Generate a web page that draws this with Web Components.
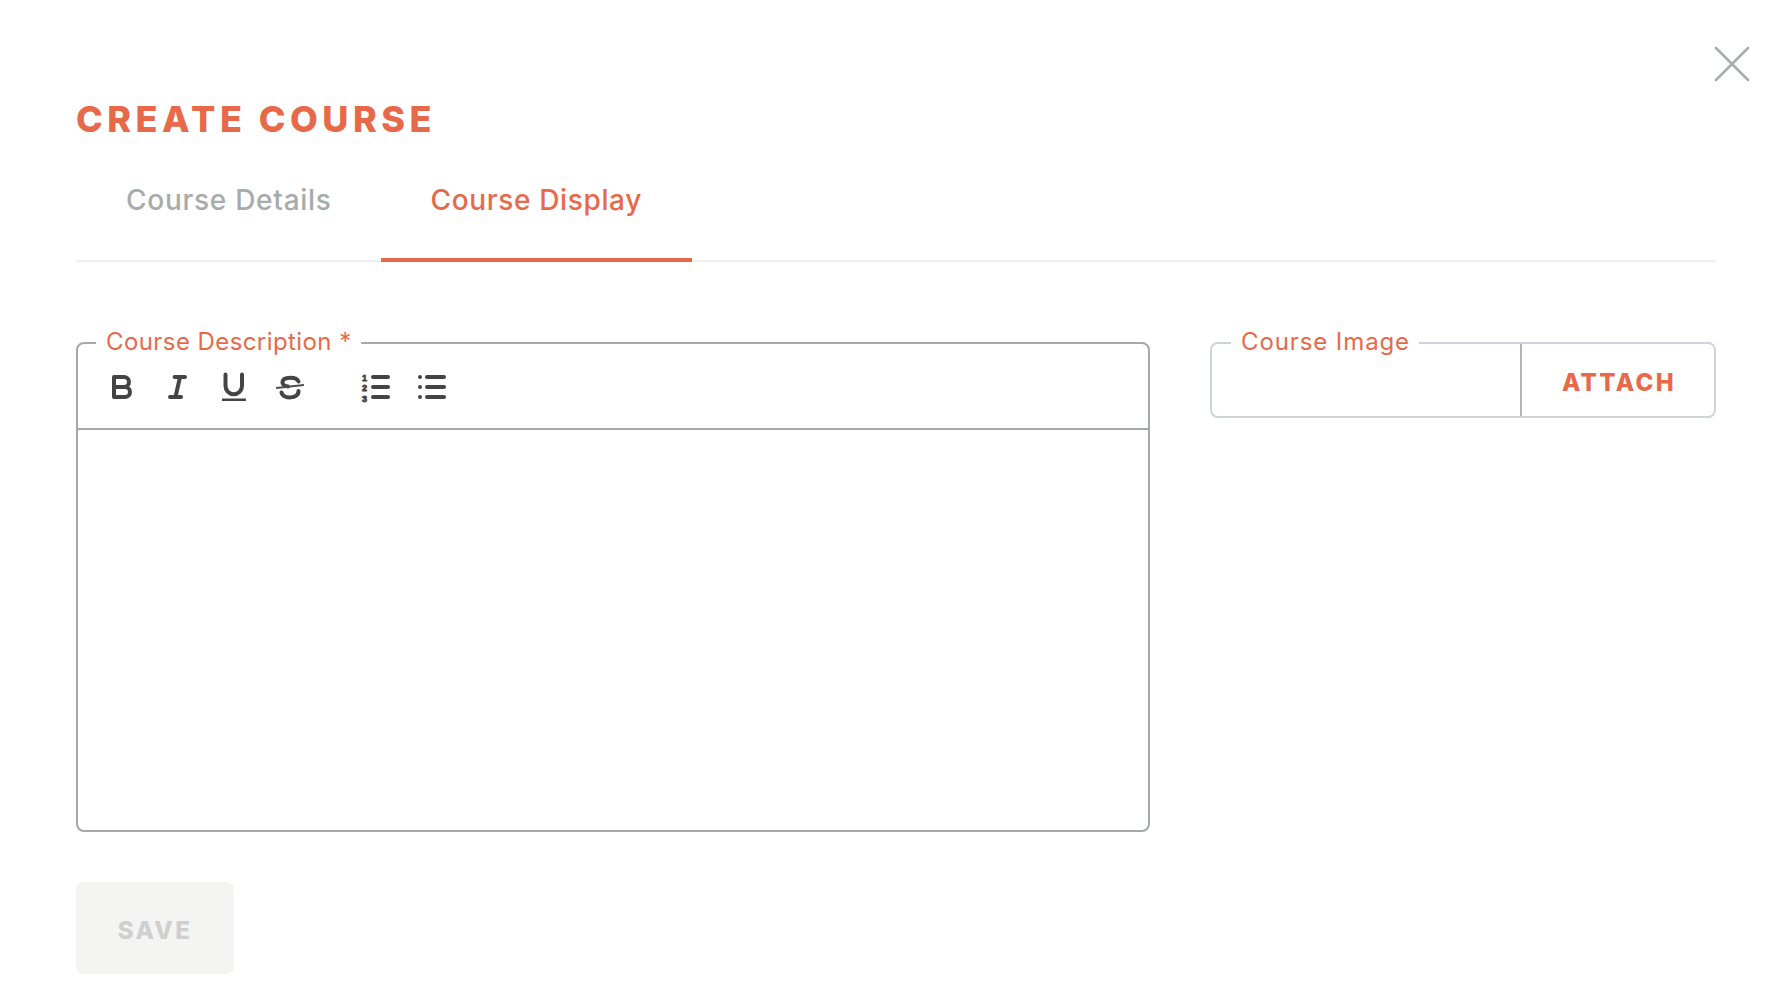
<!DOCTYPE html>
<html lang="en"><head><meta charset="utf-8"><title>Create Course</title>
<style>
html,body{margin:0;background:#fff}
body{font-family:Inter,"Liberation Sans",sans-serif;--accent:#e8694a;width:1792px;height:992px;overflow:hidden}
</style></head><body>
<course-modal>
  <course-tabs slot="tabs"></course-tabs>
  <field-box slot="main" label="Course Description *" tone="#a5aaa8" radius="8" lx="20" ls=".42"><rich-editor></rich-editor></field-box>
  <field-box slot="side" label="Course Image" tone="#cfd3da" radius="8" lx="21" ls=".9"><attach-input></attach-input></field-box>
  <save-button slot="save">SAVE</save-button>
</course-modal>
<script>
function def(name, css, html, extra){
  const tpl=document.createElement('template');
  tpl.innerHTML='<style>'+css+'</style>'+html;
  customElements.define(name,class extends HTMLElement{
    constructor(){super();this.attachShadow({mode:'open'}).appendChild(tpl.content.cloneNode(true));}
    connectedCallback(){extra&&extra(this);}
  });
}
def('course-modal',`
 :host{display:block;position:relative;box-sizing:border-box;width:1792px;height:992px;padding:97px 76px 0}
 h1{margin:0;font-size:36px;line-height:44px;font-weight:800;letter-spacing:4.5px;color:var(--accent)}
 .close{position:absolute;left:1714px;top:46px;width:36px;height:36px;display:block;background:none;border:0;padding:0}
 .tabs{display:block;margin-top:20px}
 .row{display:grid;grid-template-columns:1074px 506px;column-gap:60px;align-items:start;margin-top:80px}
 .save{display:block;margin-top:50px}
`,`
 <button class="close" aria-label="Close"><svg width="36" height="36" viewBox="0 0 36 36" fill="none" stroke="#a9aeab" stroke-width="2.6" stroke-linecap="round"><path d="M2 2 34 34M34 2 2 34"/></svg></button>
 <h1>CREATE COURSE</h1>
 <div class="tabs"><slot name="tabs"></slot></div>
 <div class="row"><div><slot name="main"></slot></div><div><slot name="side"></slot></div></div>
 <div class="save"><slot name="save"></slot></div>
`);
def('course-tabs',`
 :host{display:flex;border-bottom:2px solid #efefef;height:99px;box-sizing:content-box}
 .tab{box-sizing:border-box;height:101px;padding:0 49px 0 50px;line-height:78px;font-size:28px;letter-spacing:.72px;color:#a7acaa;white-space:nowrap;font-weight:500}
 .tab.on{color:var(--accent);border-bottom:4px solid var(--accent);letter-spacing:.64px;padding:0 50px}
`,`<div class="tab">Course Details</div><div class="tab on">Course Display</div>`);
def('field-box',`
 :host{display:block;position:relative}
 .box{border:2px solid var(--tone);border-radius:var(--rad);overflow:hidden}
 .label{position:absolute;left:var(--lx);top:-16px;padding:0 9px 0 10px;background:#fff;font-size:24px;line-height:32px;color:var(--accent);white-space:nowrap;letter-spacing:var(--ls)}
`,`<div class="box"><slot></slot></div><div class="label"></div>`,el=>{
  el.shadowRoot.querySelector('.label').textContent=el.getAttribute('label');
  el.style.setProperty('--tone',el.getAttribute('tone'));
  el.style.setProperty('--rad',el.getAttribute('radius')+'px');
  el.style.setProperty('--lx',el.getAttribute('lx')+'px');
  el.style.setProperty('--ls',el.getAttribute('ls')+'px');
});
def('rich-editor',`
 :host{display:block}
 .bar{display:flex;align-items:center;gap:24px;height:86px;padding:2px 0 0 28px;box-sizing:border-box;border-bottom:2px solid #a5aaa8}
 .bar svg{display:block;width:32px;height:32px;fill:none;stroke:#444;stroke-linecap:round;stroke-linejoin:round;overflow:visible}
 .sep{width:5px}
 .area{height:400px}
`,`<div class="bar">
 <svg viewBox="0 0 32 32" stroke-width="4"><path d="M8 6H18A5 5 0 0 1 18 16H8ZM8 16H19A5 5 0 0 1 19 26H8Z"/></svg>
 <svg viewBox="0 0 32 32" stroke-width="4"><path d="M12.600 6H23M8 26H19M18 6 13.500 26"/></svg>
 <svg viewBox="0 0 32 32" stroke-width="4"><path d="M7.500 3.500V15A8.250 8.250 0 0 0 24 15V3.500"/><path d="M4 28.700H28" stroke-linecap="butt" stroke-width="2.600"/></svg>
 <svg viewBox="0 0 32 32" stroke-width="4"><path d="M24.500 10.500C23 5.500 9 5 8.500 11C8.200 14 11 15 14 15.500M24.500 20C25 28 9 28.500 7.500 21.500"/><path d="M2 17 30 14" stroke-width="2" stroke="#4d4d4d" stroke-linecap="butt"/></svg>
 <div class="sep"></div>
 <svg viewBox="0 0 32 32" stroke-width="4"><path d="M14 6H29M14 16H29M14 26H29"/><g fill="#444" stroke="#444" stroke-width=".8" font-family="Liberation Sans,sans-serif" font-size="9" font-weight="700"><text x="3" y="9.500">1</text><text x="3" y="20">2</text><text x="3" y="30.500">3</text></g></svg>
 <svg viewBox="0 0 32 32" stroke-width="4"><path d="M12 6H29M12 16H29M12 26H29"/><g fill="#444" stroke="none"><circle cx="5" cy="6" r="2"/><circle cx="5" cy="16" r="2"/><circle cx="5" cy="26" r="2"/></g></svg>
</div><div class="area"></div>`);
def('attach-input',`
 :host{display:grid;grid-template-columns:1fr 194px;height:72px}
 .btn{border-left:2px solid #b2b5b7;display:flex;align-items:center;justify-content:center;font-size:24px;font-weight:800;letter-spacing:2.4px;color:var(--accent);padding:4px 0 0 2px;box-sizing:border-box}
`,`<div></div><div class="btn">ATTACH</div>`);
def('save-button',`
 :host{display:flex;align-items:center;justify-content:center;box-sizing:border-box;width:158px;height:92px;background:#f4f4f3;border-radius:8px;font-size:24px;font-weight:800;letter-spacing:2.4px;color:#cfcfcf;padding-top:5px}
`,`<slot></slot>`);
</script>
</body></html>
